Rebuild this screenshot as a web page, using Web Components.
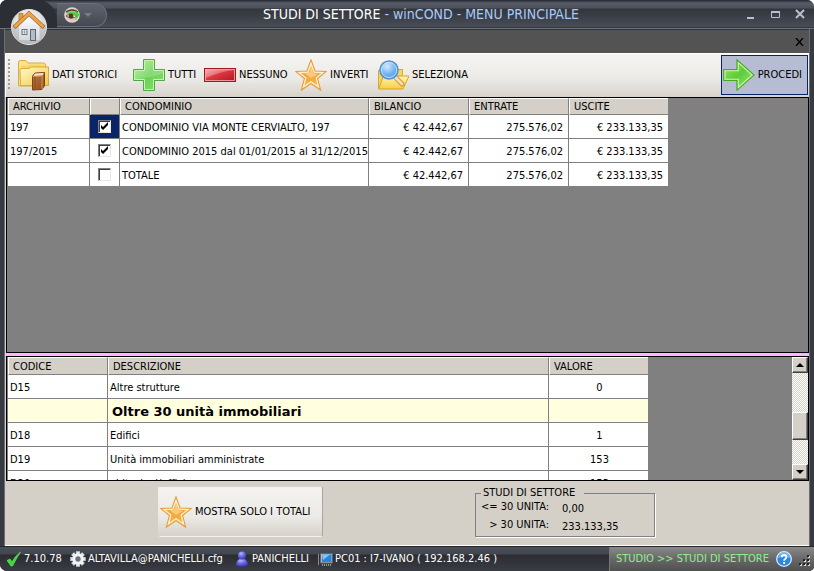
<!DOCTYPE html>
<html lang="it">
<head>
<meta charset="utf-8">
<title>STUDI DI SETTORE - winCOND - MENU PRINCIPALE</title>
<style>
html, body { height: 100%; margin: 0; }
body { background: #fff; font: 11px/14px "DejaVu Sans Condensed", "DejaVu Sans", sans-serif; color: #000; }
</style>
</head>
<body>
<app-window></app-window>
<script>
const define = (name, html, setup) => customElements.define(name, class extends HTMLElement {
  connectedCallback() {
    if (this.shadowRoot) return;
    const t = document.createElement('template');
    t.innerHTML = html;
    this.attachShadow({ mode: 'open' }).append(t.content.cloneNode(true));
    if (setup) setup(this, this.shadowRoot);
  }
});

const STAR = `<defs><linearGradient id="s" x1="0" y1="0" x2="0" y2="1"><stop offset="0" stop-color="#fbd28a"/><stop offset=".5" stop-color="#f3a63c"/><stop offset="1" stop-color="#f9b94c"/></linearGradient></defs>
<path d="M16 1 L20 12 L31 12.500 L22.500 19.500 L25.500 31 L16 24.500 L6.500 31 L9.500 19.500 L1 12.500 L12 12Z" fill="url(#s)" stroke="#e8993a" stroke-width="1.200"/>
<path d="M16 4.500 L19.200 13.200 L28 13.600 L21.200 19 L23.600 28 L16 22.900 L8.400 28 L10.800 19 L4 13.600 L12.800 13.200Z" fill="none" stroke="#fff0cf" stroke-width="1.300"/>
<path d="M10 14.500 L15 13 L16 7 L18 14 L23 15 L16 19Z" fill="#ffdfa5" opacity=".6"/>`;

const ICONS = {
  folder: `<defs><linearGradient id="a" x1="0" y1="0" x2="1" y2="1"><stop offset="0" stop-color="#fffbd2"/><stop offset="1" stop-color="#f3c63e"/></linearGradient><linearGradient id="b" x1="0" y1="0" x2="1" y2="1"><stop offset="0" stop-color="#c07a40"/><stop offset="1" stop-color="#8c4b1e"/></linearGradient></defs>
<path d="M1.500 27V3.500q0-2 2-2h5l3 2.500h15q2 0 2 2V27Z" fill="#f9e48c" stroke="#dba93b"/>
<path d="M3.500 26V8q0-1.500 1.500-1.500h6l1.500-1h15V26Z" fill="#f5d66b"/>
<path d="M3.500 26.500L3 11.500q0-2 2-2h7l2-1.500h17.500v18.500Z" fill="url(#a)" stroke="#dda937"/>
<path d="M15.500 17l2.500-3 9.500-.5v13l-2.500 4-9.500.5Z" fill="url(#b)" stroke="#7c421b"/><path d="M18 14.500l9-.5-1.500 2.500-9 .5Z" fill="#f3e6d0"/><path d="M15.500 17.500l9.500-.5v13" stroke="#d39a62" fill="none"/><path d="M18 17.500v13" stroke="#8a4c20" fill="none"/>`,
  plus: `<defs><linearGradient id="g" x1="0" y1="0" x2="1" y2="1"><stop offset="0" stop-color="#a9ef8a"/><stop offset=".5" stop-color="#68d153"/><stop offset="1" stop-color="#8be370"/></linearGradient></defs>
<path d="M10.500.5h11v10h10v11h-10v10h-11v-10H.5v-11h10Z" fill="url(#g)" stroke="#52a548"/><path d="M11.500 1.500h9v10h10v9h-10v10h-9v-10h-10v-9h10Z" fill="none" stroke="#c8f7ae"/><path d="M12 2h8v10h10v2Q20 19 2 20v-8h10Z" fill="#fff" opacity=".2"/>`,
  minus: `<defs><linearGradient id="r" x1="0" y1="0" x2="1" y2="1"><stop offset="0" stop-color="#f7a0a0"/><stop offset=".4" stop-color="#dd3c43"/><stop offset="1" stop-color="#b51420"/></linearGradient></defs>
<rect x=".5" y="9.500" width="31" height="13" fill="url(#r)" stroke="#a41522"/><rect x="1.500" y="10.500" width="29" height="11" fill="none" stroke="#f4b4b4" stroke-width=".8"/><path d="M2 11h28Q18 12 2 19Z" fill="#fff" opacity=".28"/>`,
  star: STAR,
  search: `<defs><linearGradient id="f" x1="0" y1="0" x2="0" y2="1"><stop offset="0" stop-color="#fff7b1"/><stop offset="1" stop-color="#f6cd45"/></linearGradient><radialGradient id="l" cx=".4" cy=".3"><stop offset="0" stop-color="#d3ecff"/><stop offset="1" stop-color="#65acec"/></radialGradient></defs>
<path d="M1.500 29.500V11.500h7l2-1h15v6" fill="#f3d568" stroke="#d9a72e"/><path d="M1.500 30l5-13h25.500l-6 13Z" fill="url(#f)" stroke="#d7a224"/>
<path d="M19 19l6 6" stroke="#d99a3a" stroke-width="5" stroke-linecap="round"/><path d="M17.500 17.500l3 3" stroke="#dce4ee" stroke-width="3"/><path d="M21 21l4 4" stroke="#fbe3ad" stroke-width="2.500" stroke-linecap="round"/>
<circle cx="12" cy="11" r="9" fill="url(#l)" stroke="#5a92cc" stroke-width="1.600"/><circle cx="12" cy="11" r="7.600" fill="none" stroke="#c9e7ff" stroke-width=".8"/>`,
  arrow: `<defs><linearGradient id="w" x1="0" y1="0" x2="1" y2="1"><stop offset="0" stop-color="#9ae56b"/><stop offset=".5" stop-color="#5fcb3d"/><stop offset="1" stop-color="#a1ed6e"/></linearGradient></defs>
<path d="M.8 10.500H14V1l17 15-17 15v-9.500H.8Z" fill="url(#w)" stroke="#45a526" stroke-width="1.200"/><path d="M2 11.800h13.300V3.600L29.300 16 15.300 28.500v-8.300H2Z" fill="none" stroke="#caf7a5" stroke-width="1.100"/>`,
  home: `<defs><radialGradient id="o" cx=".5" cy=".35" r=".7"><stop offset="0" stop-color="#fff"/><stop offset=".6" stop-color="#dcdddd"/><stop offset="1" stop-color="#a6a8ab"/></radialGradient><linearGradient id="h" x1="0" y1="0" x2="0" y2="1"><stop offset="0" stop-color="#fff"/><stop offset="1" stop-color="#d2d7dc"/></linearGradient></defs>
<circle cx="18" cy="18" r="17.500" fill="url(#o)" stroke="#e4e6e8"/><path d="M1 18Q18 13 35 18A17 17 0 0 1 1 18Z" fill="#b8babd" opacity=".5"/>
<path d="M7.500 17v14.500h21.500V17L18 6Z" fill="url(#h)" stroke="#b8bcc1" stroke-width=".7"/><path d="M8 12V4.500h4v4" fill="#ea9f3b" stroke="#a66f28" stroke-width=".7"/>
<path d="M3 18.500L18 4.500l15 14" fill="none" stroke="#99662b" stroke-width="4.200"/><path d="M3.500 18L18 4.500l14.500 13.500" fill="none" stroke="#eea347" stroke-width="3"/>
<rect x="11" y="20.500" width="5" height="5" fill="#eef2f5" stroke="#687581"/><path d="M13.500 20.500v5M11 23h5" stroke="#687581" stroke-width=".5"/><rect x="19.500" y="20.500" width="5" height="11" fill="#b5bcc4" stroke="#5c6670"/>`,
  eye: `<circle cx="8" cy="8" r="7.800" fill="#dadada"/><circle cx="8" cy="8" r="6.500" fill="#e5c2b1"/><path d="M2 5Q8 1 14 5" fill="none" stroke="#5d3826" stroke-width="1.600"/><path d="M2 9Q7.500 4 13 9 7.500 13 2 9Z" fill="#fff" stroke="#7d4634"/><circle cx="7" cy="9" r="2.500" fill="#413a38"/><path d="M6 5.500h5.500V2.500L15.500 8l-4 5V9.500" fill="#35d229" opacity=".85"/><path d="M3 5.500h7" stroke="#35d229" stroke-width="2" opacity=".7"/>`,
  tick: `<path d="M1 9.500l3-1.500 2 3Q9 5 14.500 1 10 8 6.500 15H5Z" fill="#36dd35" stroke="#75ee6d" stroke-width=".6"/>`,
  gear: `<g fill="#e5eaec" stroke="#c8d1d6" stroke-width=".4"><rect x="6.200" y=".5" width="3.600" height="15"/><rect x="6.200" y=".5" width="3.600" height="15" transform="rotate(45 8 8)"/><rect x="6.200" y=".5" width="3.600" height="15" transform="rotate(90 8 8)"/><rect x="6.200" y=".5" width="3.600" height="15" transform="rotate(135 8 8)"/></g><circle cx="8" cy="8" r="5.500" fill="#f2f5f6"/><circle cx="8" cy="8" r="2.700" fill="#68747b"/>`,
  user: `<defs><radialGradient id="u" cx=".4" cy=".25" r=".8"><stop offset="0" stop-color="#b4b5ff"/><stop offset=".6" stop-color="#5a59d8"/><stop offset="1" stop-color="#3837b4"/></radialGradient></defs><path d="M2 13.500Q3 7.500 8 7.500T14 13.500Q13 15.500 8 15.500T2 13.500Z" fill="url(#u)"/><circle cx="8" cy="4.500" r="4" fill="url(#u)"/>`,
  pc: `<path d="M1.500 3v11" stroke="#8d8d86"/><rect x="3.500" y="2.500" width="12" height="9.500" fill="#b5b8bc" stroke="#62666b"/><rect x="5" y="3.500" width="9.500" height="7.500" fill="#2486dc"/><path d="M5 3.500h8L6 9Z" fill="#80c5fa"/><path d="M5 14h10" stroke="#b8b8b8" stroke-width="1.500" stroke-dasharray="1 1"/>`,
  help: `<circle cx="8" cy="8" r="7.300" fill="#2987df" stroke="#d9edff" stroke-width="1.300"/><path d="M2 7a6 6 0 0 1 12 0Q8 5 2 7Z" fill="#9dd0fb" opacity=".6"/><path d="M5.800 6.300q0-2.300 2.300-2.300t2.300 2q0 1.300-1.300 2-1 .6-1 1.700" fill="none" stroke="#fff" stroke-width="1.800"/><rect x="7.200" y="11" width="1.900" height="1.900" fill="#fff"/>`
};
define('app-icon', `<style>:host{display:block;flex:none;width:16px;height:16px}:host([large]){width:32px;height:32px}:host([orb]){width:36px;height:36px}svg{display:block;width:100%;height:100%}</style><svg aria-hidden="true"></svg>`, (el, root) => {
  const n = el.getAttribute('name'), s = root.querySelector('svg');
  const size = n === 'home' ? 36 : el.hasAttribute('large') ? 32 : 16;
  s.setAttribute('viewBox', `0 0 ${size} ${size}`);
  s.innerHTML = ICONS[n];
});

define('tool-button', `<style>
:host{display:block}
button{display:flex;align-items:center;gap:3px;height:100%;width:100%;padding:0;border:1px solid transparent;background:none;font:inherit;color:inherit;white-space:nowrap;text-align:left}
:host([active]) button{background:#b6bdd2;border-color:#0a246a;padding:0 5px 0 1px}
:host([raised]) button{background:linear-gradient(#f4f3f0,#eceae6 60%,#d6d2cb);border-radius:3px;border-right-color:#aaa69f;padding:0 1px}
</style><button type="button"><slot name="icon"></slot><span><slot></slot></span></button>`);

define('title-bar', `<style>
:host{display:flex;align-items:stretch;height:29px;box-sizing:border-box;border-bottom:1px solid #6c727d;background:linear-gradient(#23262e,#565b67 3px,#4b505a 8px,#33363c 9px,#484c55 27px,#22262c 28px);color:#fff;position:relative}
.orb{position:absolute;left:11px;top:9px}
.well{width:57px;background:#2b2e34;border-radius:0 20px 0 0}
.quick{display:flex;align-items:center;gap:4px;width:50px;box-sizing:border-box;padding:0 7px;margin:3px 0 1px;border-radius:0 13px 13px 0;background:linear-gradient(#5e636d,#454951);border:1px solid #6a6f79;border-left:0}
.quick i{border:4px solid transparent;border-top-color:#777d88;border-bottom:0}
h1{flex:1;margin:0;padding-right:12px;font-size:14px;font-weight:400;line-height:29px;text-align:center;white-space:nowrap;color:#a9c9fb}
h1 b{font-weight:400;color:#fff}
nav{display:flex;align-items:center;gap:14px;padding-right:9px}
button{padding:0;border:0;background:none;display:block;height:12px}
svg{display:block}
</style>
<span class="well"></span><div class="quick"><app-icon name="eye"></app-icon><i></i></div>
<h1><b>STUDI DI SETTORE</b> - winCOND - MENU PRINCIPALE</h1>
<nav>
<button type="button" aria-label="Riduci"><svg width="10" height="12"><path d="M0 10h7" stroke="#b7c0cf" stroke-width="2"/></svg></button>
<button type="button" aria-label="Ingrandisci"><svg width="10" height="12"><path d="M.5 3.500h8v6h-8z" fill="none" stroke="#b7c0cf"/><path d="M0 4h9" stroke="#b7c0cf" stroke-width="2"/></svg></button>
<button type="button" aria-label="Chiudi"><svg width="10" height="12"><path d="M1 2l8 8M9 2l-8 8" stroke="#b7c0cf" stroke-width="2"/></svg></button>
</nav>
<app-icon class="orb" name="home" orb></app-icon>`);

define('tab-strip', `<style>:host{display:flex;justify-content:flex-end;align-items:center;height:23px;background:#535353;border-top:1px solid #2d3036;padding-right:5px}button{padding:0;border:0;background:none}svg{display:block}</style>
<button type="button" aria-label="Chiudi scheda"><svg width="9" height="8"><path d="M1 0l7 8M8 0l-7 8" stroke="#000" stroke-width="1.300"/></svg></button>`);

define('tool-bar', `<style>
:host{display:grid;grid-template-columns:10px 116px 71px 91px 82px auto 1fr auto;height:44px;padding:1px 1px 2px 0;box-sizing:border-box;border-top:1px solid #fff;border-left:1px solid #fff;background:linear-gradient(#f6f5f3,#ebe9e5 60%,#d7d2cb)}
.grip{width:2px;margin:4px 0 4px 2px;background:repeating-linear-gradient(#a09d98 0 2px,transparent 2px 4px)}
.last{grid-column:8}
</style><span class="grip"></span>
<tool-button><app-icon slot="icon" name="folder" large></app-icon>DATI STORICI</tool-button>
<tool-button><app-icon slot="icon" name="plus" large></app-icon>TUTTI</tool-button>
<tool-button><app-icon slot="icon" name="minus" large></app-icon>NESSUNO</tool-button>
<tool-button><app-icon slot="icon" name="star" large></app-icon>INVERTI</tool-button>
<tool-button><app-icon slot="icon" name="search" large></app-icon>SELEZIONA</tool-button>
<tool-button class="last" active><app-icon slot="icon" name="arrow" large></app-icon>PROCEDI</tool-button>`);

const GRID = `
:host{display:block;overflow:hidden;box-sizing:border-box;min-height:0;border:1px solid #000;padding-left:1px;background:#808080}
table{border-collapse:separate;border-spacing:0;table-layout:fixed}
th,td{box-sizing:border-box;border-right:1px solid #808080;border-bottom:1px solid #808080;background:#fff;white-space:nowrap;overflow:hidden;text-align:left;font-weight:400}
td{height:24px;padding:2px 0 0 2px}
th{height:17px;padding:1px 4px 0;line-height:14px;background:#d4d0c8;border-top:1px solid #fff;border-left:1px solid #fff}
tr>:last-child{border-right:0}
`;
define('archive-grid', `<style>${GRID}
.n{text-align:right;padding-right:5px}.c{text-align:center;padding:0}.on{background:#0a246a}
input{appearance:none;display:block;width:13px;height:13px;margin:0 auto;background:#fff;border:1px solid;border-color:#808080 #e8e6e0 #e8e6e0 #808080;box-shadow:inset 1px 1px #404040}
label{display:grid;justify-content:center}input,svg{grid-area:1/1}svg{position:relative;pointer-events:none}
</style>
<table style="width:660px"><colgroup><col style="width:82px"><col style="width:30px"><col style="width:249px"><col style="width:100px"><col style="width:100px"><col></colgroup>
<thead><tr><th>ARCHIVIO</th><th></th><th>CONDOMINIO</th><th>BILANCIO</th><th>ENTRATE</th><th>USCITE</th></tr></thead><tbody></tbody></table>`, (el, root) => {
  root.querySelector('tbody').innerHTML = [
    ['197', true, 'CONDOMINIO VIA MONTE CERVIALTO, 197'],
    ['197/2015', true, 'CONDOMINIO 2015 dal 01/01/2015 al 31/12/2015'],
    ['', false, 'TOTALE']
  ].map((r, i) => `<tr><td>${r[0]}</td><td class="c${i ? '' : ' on'}"><label><input type="checkbox" aria-label="${r[2]}"${r[1] ? ' checked' : ''}>${r[1] ? '<svg width="13" height="13"><path d="M3 5v3l2 2 5-5V2L5 7Z"/></svg>' : ''}</label></td><td>${r[2]}</td><td class="n">€ 42.442,67</td><td class="n">275.576,02</td><td class="n">€ 233.133,35</td></tr>`).join('');
});

define('scroll-bar', `<style>
:host{display:flex;flex-direction:column;width:16px;background:repeating-conic-gradient(#fff 0 25%,#d4d0c8 0 50%) 0 0/2px 2px}
button{display:grid;place-items:center;flex:none;height:16px;padding:0;background:#d4d0c8;border:1px solid;border-color:#fff #404040 #404040 #fff;box-shadow:inset -1px -1px #808080}
i{border:4px solid transparent;border-bottom-color:#000;border-top:0}.d{border-top:4px solid #000;border-bottom:0}
.a{flex:39}.thumb{flex:27;background:#d4d0c8;border:1px solid;border-color:#fff #404040 #404040 #fff;box-shadow:inset -1px -1px #808080}.b{flex:24}
</style><button type="button" aria-label="Su"><i></i></button><span class="a"></span><span class="thumb"></span><span class="b"></span><button type="button" aria-label="Giù"><i class="d"></i></button>`);

define('code-grid', `<style>${GRID}
:host{display:flex;justify-content:space-between}
.view{overflow:hidden}
th{height:18px;padding-top:2px}
td:last-child{text-align:center}
.group td{background:#ffffe0;font:700 13px/16px "DejaVu Sans",sans-serif;padding-left:4px}
</style><div class="view"><table style="width:640px"><colgroup><col style="width:100px"><col style="width:441px"><col></colgroup>
<thead><tr><th>CODICE</th><th>DESCRIZIONE</th><th>VALORE</th></tr></thead><tbody>
<tr><td>D15</td><td>Altre strutture</td><td>0</td></tr>
<tr class="group"><td></td><td>Oltre 30 unità immobiliari</td><td></td></tr>
<tr><td>D18</td><td>Edifici</td><td>1</td></tr>
<tr><td>D19</td><td>Unità immobiliari amministrate</td><td>153</td></tr>
<tr><td>D20</td><td>abitazioni/uffici</td><td>153</td></tr>
</tbody></table></div><scroll-bar></scroll-bar>`);

define('totals-panel', `<style>
:host{display:flex;align-items:flex-start;justify-content:space-between;height:65px;box-sizing:border-box;padding:5px 154px 0 153px;background:#d4d0c8;border-bottom:1px solid #fff}
tool-button{width:165px;height:51px}
fieldset{box-sizing:border-box;width:180px;margin:0;padding:0 5px;border:1px solid #808080;box-shadow:1px 1px #fff;min-width:0}
legend{padding:0 9px 0 2px}
dl{display:grid;grid-template-columns:68px auto;column-gap:13px;row-gap:2px;margin:0;padding-bottom:2px}
dt{text-align:right;white-space:nowrap}dd{margin:0;padding-top:2px}
</style><tool-button raised><app-icon slot="icon" name="star" large></app-icon>MOSTRA SOLO I TOTALI</tool-button>
<fieldset><legend>STUDI DI SETTORE</legend><dl><dt>&lt;= 30 UNITA:</dt><dd>0,00</dd><dt>&gt; 30 UNITA:</dt><dd>233.133,35</dd></dl></fieldset>`);

define('status-item', `<style>:host{display:flex;align-items:center;gap:2px;white-space:nowrap}</style><slot name="icon"></slot><span><slot></slot></span>`);
define('status-bar', `<style>
:host{display:flex;height:25px;box-sizing:border-box;padding-left:6px;color:#fff;border-top:1px solid #22252b;background:linear-gradient(#4a4f58,#42464e 7px,#2b2d32 8px,#393c43)}
.left{display:grid;grid-template-columns:64px 164px 83px auto;flex:1}
.right{display:flex;align-items:center;gap:7px;padding:0 3px 0 6px;color:#90ee90;border-left:1px solid #777;background:linear-gradient(#898989,#686868 50%,#505050);white-space:nowrap}
.right svg{align-self:flex-end;margin-bottom:4px}
</style><div class="left">
<status-item><app-icon slot="icon" name="tick"></app-icon>7.10.78</status-item>
<status-item><app-icon slot="icon" name="gear"></app-icon>ALTAVILLA@PANICHELLI.cfg</status-item>
<status-item><app-icon slot="icon" name="user"></app-icon>PANICHELLI</status-item>
<status-item><app-icon slot="icon" name="pc"></app-icon>PC01 : I7-IVANO ( 192.168.2.46 )</status-item></div>
<div class="right"><span>STUDIO &gt;&gt; STUDI DI SETTORE</span><app-icon name="help"></app-icon>
<svg width="12" height="12"><path d="M9 1h2v2H9zM5 5h2v2H5zM9 5h2v2H9zM1 9h2v2H1zM5 9h2v2H5zM9 9h2v2H9z" fill="#d8d8d8"/><path d="M8 0h2v2H8zM4 4h2v2H4zM8 4h2v2H8zM0 8h2v2H0zM4 8h2v2H4zM8 8h2v2H8z" fill="#222"/></svg></div>`);

define('app-window', `<style>
:host{display:flex;flex-direction:column;height:100vh;border-radius:7px 7px 5px 7px;overflow:hidden;background:#373a41}
main{flex:1;min-height:0;display:grid;grid-template-rows:auto auto 1fr 3px 125px auto;margin:0 5px;box-shadow:-1px 0 #6b6f78,1px 0 #6b6f78;background:#d4d0c8}
archive-grid,code-grid{margin:0 0 0 1px}
.split{background:#ffb5ff}
</style><title-bar></title-bar><main><tab-strip></tab-strip><tool-bar></tool-bar><archive-grid></archive-grid><div class="split" role="separator"></div><code-grid></code-grid><totals-panel></totals-panel></main><status-bar></status-bar>`);
</script>
</body>
</html>
